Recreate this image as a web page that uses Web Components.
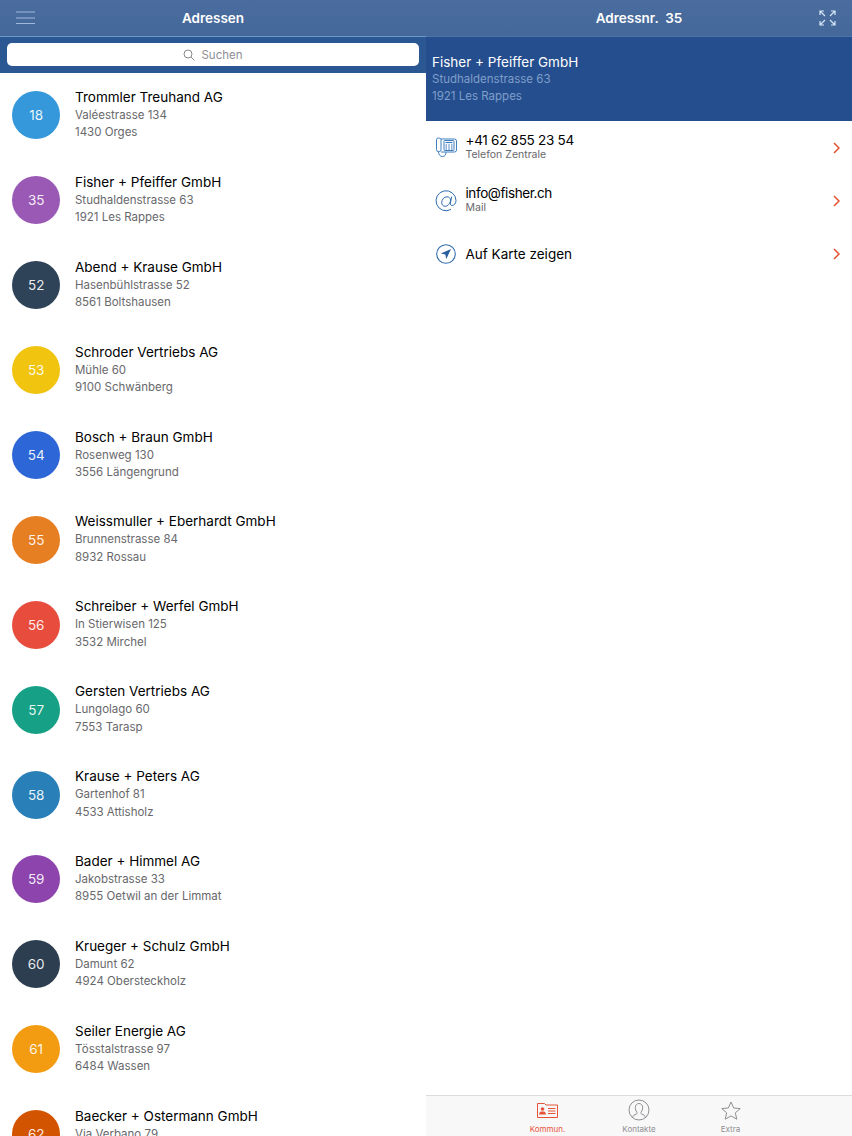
<!DOCTYPE html>
<html lang="de"><head><meta charset="utf-8"><title>Adressen</title>
<style>
html,body{margin:0;height:1136px;overflow:hidden;background:#fff;font-family:Inter,"Noto Sans",sans-serif;color:#000}
</style></head><body>
<app-shell></app-shell>
<script>
const ICONS={
menu:'<svg width="20" height="14" viewBox="0 0 20 14" fill="none" stroke="#9db9dc" stroke-width="1"><path d="M0 1h19M0 7h19M0 12.5h19"/></svg>',
expand:'<svg width="17" height="16" viewBox="0 0 17 16" fill="none" stroke="#d5e6f7" stroke-width="1.2"><path d="M1 5V1h4M1 1l5 5M12 1h4v4M16 1l-5 5M1 11v4h4M1 15l5-5M12 15h4v-4M16 15l-5-5"/></svg>',
search:'<svg width="12" height="12" viewBox="0 0 12 12" fill="none" stroke="#8a8a8e" stroke-width="1"><circle cx="5" cy="5" r="4"/><path d="M8 8l3.400 3.400"/></svg>',
phone:'<svg width="21" height="21" viewBox="0 0 21 21" fill="none" stroke="#3f7fc0" stroke-width="1"><rect x=".5" y="1" width="4.500" height="13.500" rx="1.800"/><path d="M5 2h13.500a2 2 0 0 1 2 2v9a2 2 0 0 1-2 2H5"/><rect x="8" y="3.500" width="10" height="10" rx=".8"/><path d="M9.500 5.500h7" stroke-width="1.200"/><path d="M2.500 14.500c0 3 1.500 5 4 5s3.500-2 3.500-4.500"/><path d="M9.500 8h7M9.500 10h7M9.500 12h7" stroke-dasharray="1.500 1.250" stroke-width="1.200" stroke="#2f6db0"/></svg>',
at:'<svg width="22" height="22" viewBox="0 0 22 22" fill="none" stroke="#2f6db0" stroke-width="1"><path d="M16 19.400A10 10 0 1 1 21 10.300c0 3-1.700 5.200-3.800 5.200-1.400 0-2.100-1-1.800-2.500l1.300-6.400"/><path d="M15.700 10c-.3-2-1.800-3.200-3.700-3.200-2.800 0-5.300 2.700-5.300 5.800 0 2.200 1.400 3.700 3.400 3.700 2.600 0 4.800-2.300 5.600-6.300z"/></svg>',
nav:'<svg width="20" height="20" viewBox="0 0 20 20" fill="none"><circle cx="10" cy="10" r="9.300" stroke="#2f6db0" stroke-width="1.100"/><path d="M15 5L4.800 9.600l4.500.9 1 4.500z" fill="#2a5f9f"/></svg>',
chev:'<svg width="7" height="12" viewBox="0 0 7 12" fill="none" stroke="#e2502f" stroke-width="1.500"><path d="M1 1l5 5-5 5"/></svg>',
card:'<svg width="21" height="15" viewBox="0 0 21 15" fill="none" stroke="#e8533a" stroke-width="1"><path d="M.500 .500h7l1.500 1.500h11.500v12.500H.500z"/><circle cx="5.500" cy="6" r="1.800" fill="#e8533a" stroke="none"/><path d="M2 11.500c.3-2.500 1.500-3 3.500-3s3.200.5 3.500 3z" fill="#e8533a" stroke="none"/><path d="M11 5.500h7.500M11 8h7.500M11 10.500h7.500"/></svg>',
person:'<svg width="22" height="22" viewBox="0 0 22 22" fill="none" stroke="#8e8e93" stroke-width="1"><circle cx="11" cy="11" r="10"/><path d="M4.500 18.500c.5-2 2-2.800 4-3.500.8-.4.800-1.200.3-2-1-1.300-1.500-2.600-1.500-4.500 0-2.500 1.700-4 3.700-4s3.700 1.500 3.700 4c0 1.900-.5 3.200-1.500 4.500-.5.800-.5 1.600.3 2 2 .7 3.500 1.500 4 3.500"/></svg>',
star:'<svg width="20" height="19" viewBox="0 0 20 19" fill="none" stroke="#8e8e93" stroke-width="1"><path d="M10 1l2.700 6 6.500.6-4.900 4.300 1.500 6.300L10 14.900l-5.800 3.300 1.500-6.300L.800 7.600l6.500-.6z"/></svg>'
};
function def(name,css,html){
  customElements.define(name,class extends HTMLElement{
    connectedCallback(){
      if(this.shadowRoot)return;
      const r=this.attachShadow({mode:'open'});
      const a=n=>this.getAttribute(n)||'';
      r.innerHTML='<style>'+css+'</style>'+html(a);
    }
  });
}
def('nav-bar',`:host{display:grid;grid-template-columns:54px 1fr 54px;align-items:center;height:36px;box-sizing:border-box;background:linear-gradient(#4a6c9e,#45689a);color:#fff;font-weight:600;font-size:13.500px;flex:none}
.t{text-align:center;white-space:pre}.l{padding-left:16px;display:flex}.r{display:flex;justify-content:flex-end;padding-right:16px}`,
a=>`<div class="l"><slot name="left"></slot></div><div class="t">${a('title')}</div><div class="r"><slot name="right"></slot></div>`);
def('nav-icon',`:host{display:flex}`,a=>ICONS[a('name')]);
def('search-bar',`:host{display:block;flex:none;box-sizing:border-box;height:37px;padding:6px 7px 7px;background:#2b5792;border-top:1px solid #6e9ac9}
.f{height:23px;background:#fff;border-radius:5px;display:flex;align-items:center;justify-content:center;gap:6px;color:#8e8e93;font-size:11.500px}`,
a=>`<div class="f">${ICONS.search}<span>${a('placeholder')}</span></div>`);
def('address-row',`:host{display:flex;align-items:center;height:84.900px;flex:none;padding-left:12.200px;gap:14.800px}
.c{width:48px;height:48px;border-radius:50%;display:flex;align-items:center;justify-content:center;color:rgba(255,255,255,.92);font-size:13.500px;flex:none}
.n{font-size:13.500px;line-height:19px;color:#000}.s{font-size:11.500px;line-height:17.500px;color:#68686c}
.x{margin-top:-1px}`,
a=>`<div class="c" style="background:${a('color')}">${a('num')}</div><div class="x"><div class="n">${a('name')}</div><div class="s">${a('street')}</div><div class="s">${a('city')||'&nbsp;'}</div></div>`);
def('detail-head',`:host{display:block;flex:none;height:84px;box-sizing:border-box;padding-top:17px;padding-left:6px;background:#254e8e}
.n{color:#fff;font-size:13.500px;line-height:17px}.s{color:#7f9fca;font-size:11.500px;line-height:16.500px}`,
a=>`<div class="n">${a('name')}</div><div class="s">${a('street')}</div><div class="s">${a('city')}</div>`);
def('action-row',`:host{display:flex;align-items:center;height:53px;padding:0 12.500px 0 9px;flex:none}
.i{width:22px;display:flex;justify-content:center;margin-right:8.500px}.b{flex:1}
:host([sub]) .b{margin-top:-2px}
.m{font-size:13.500px;line-height:16px}.s{font-size:10.500px;line-height:13px;color:#68686c}`,
a=>`<div class="i">${ICONS[a('icon')]}</div><div class="b"><div class="m" style="letter-spacing:${a('ls')||0}px">${a('label')}</div>${a('sub')?`<div class="s">${a('sub')}</div>`:''}</div>${ICONS.chev}`);
def('tab-bar',`:host{display:flex;justify-content:center;height:41px;box-sizing:border-box;background:#f8f8f8;border-top:1px solid #dcdcde;flex:none}`,a=>`<slot></slot>`);
def('tab-item',`:host{display:flex;flex-direction:column;align-items:center;width:91.500px;color:#8e8e93;font-size:8px}
:host([active]){color:#e8533a}.i{height:28px;display:flex;align-items:center;box-sizing:border-box}`,
a=>`<div class="i">${ICONS[a('icon')]}</div><div>${a('label')}</div>`);
const DATA=[
['18','#3498db','Trommler Treuhand AG','Valéestrasse 134','1430 Orges'],
['35','#9b59b6','Fisher + Pfeiffer GmbH','Studhaldenstrasse 63','1921 Les Rappes'],
['52','#2f4358','Abend + Krause GmbH','Hasenbühlstrasse 52','8561 Boltshausen'],
['53','#f1c40f','Schroder Vertriebs AG','Mühle 60','9100 Schwänberg'],
['54','#2d66d6','Bosch + Braun GmbH','Rosenweg 130','3556 Längengrund'],
['55','#e67e22','Weissmuller + Eberhardt GmbH','Brunnenstrasse 84','8932 Rossau'],
['56','#e74c3c','Schreiber + Werfel GmbH','In Stierwisen 125','3532 Mirchel'],
['57','#16a085','Gersten Vertriebs AG','Lungolago 60','7553 Tarasp'],
['58','#2980b9','Krause + Peters AG','Gartenhof 81','4533 Attisholz'],
['59','#8e44ad','Bader + Himmel AG','Jakobstrasse 33','8955 Oetwil an der Limmat'],
['60','#2c3e50','Krueger + Schulz GmbH','Damunt 62','4924 Obersteckholz'],
['61','#f39c12','Seiler Energie AG','Tösstalstrasse 97','6484 Wassen'],
['62','#d35400','Baecker + Ostermann GmbH','Via Verbano 79','']
];
const esc=s=>s.replace(/&/g,'&amp;');
def('address-list',`:host{display:flex;flex-direction:column;flex:1;min-height:0;overflow:hidden}`,
()=>DATA.map(d=>`<address-row num="${d[0]}" color="${d[1]}" name="${esc(d[2])}" street="${d[3]}" city="${d[4]}"></address-row>`).join(''));
def('detail-rule',`:host{display:block;height:1px;background:#4f75a8;flex:none}`,()=>'');
def('app-shell',`:host{display:grid;grid-template-columns:426px 426px;height:1136px;overflow:hidden}
.col{display:flex;flex-direction:column;height:1136px;min-width:0}.sp{flex:1}`,
()=>`<div class="col"><nav-bar title="Adressen"><nav-icon slot="left" name="menu"></nav-icon></nav-bar><search-bar placeholder="Suchen"></search-bar><address-list></address-list></div>
<div class="col"><nav-bar title="Adressnr.  35"><nav-icon slot="right" name="expand"></nav-icon></nav-bar><detail-rule></detail-rule><detail-head name="Fisher + Pfeiffer GmbH" street="Studhaldenstrasse 63" city="1921 Les Rappes"></detail-head>
<action-row icon="phone" ls="-.28" label="+41 62 855 23 54" sub="Telefon Zentrale"></action-row><action-row icon="at" ls="-.4" label="info@fisher.ch" sub="Mail"></action-row><action-row icon="nav" label="Auf Karte zeigen"></action-row><div class="sp"></div>
<tab-bar><tab-item icon="card" label="Kommun." active></tab-item><tab-item icon="person" label="Kontakte"></tab-item><tab-item icon="star" label="Extra"></tab-item></tab-bar></div>`);
</script>
</body></html>
